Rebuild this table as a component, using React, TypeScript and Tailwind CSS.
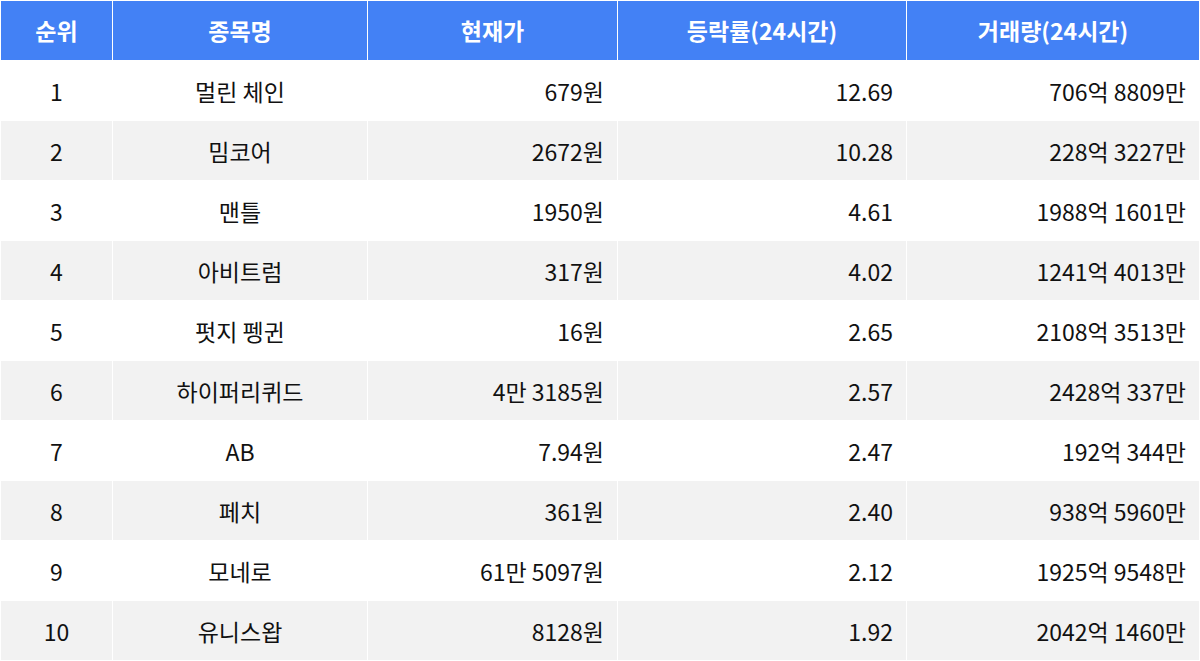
import React from 'react';

const rows = [
  ['1', '멀린 체인', '679원', '12.69', '706억 8809만'],
  ['2', '밈코어', '2672원', '10.28', '228억 3227만'],
  ['3', '맨틀', '1950원', '4.61', '1988억 1601만'],
  ['4', '아비트럼', '317원', '4.02', '1241억 4013만'],
  ['5', '펏지 펭귄', '16원', '2.65', '2108억 3513만'],
  ['6', '하이퍼리퀴드', '4만 3185원', '2.57', '2428억 337만'],
  ['7', 'AB', '7.94원', '2.47', '192억 344만'],
  ['8', '페치', '361원', '2.40', '938억 5960만'],
  ['9', '모네로', '61만 5097원', '2.12', '1925억 9548만'],
  ['10', '유니스왑', '8128원', '1.92', '2042억 1460만'],
];

const headers = ['순위', '종목명', '현재가', '등락률(24시간)', '거래량(24시간)'];

export default function App() {
  return (
    <div
      className="w-[1200px] bg-white text-[23px] text-[#111]"
      style={{ fontFamily: '"Noto Sans CJK KR", "Noto Sans", sans-serif' }}
    >
      <div className="grid grid-cols-[111px_254px_249px_288px_292px] gap-px p-px">
        {headers.map((h) => (
          <div key={h} className="h-[59px] bg-[#4381f5] text-white font-bold flex items-center justify-center">
            {h}
          </div>
        ))}
        {rows.map((r, i) => {
          const bg = i % 2 === 0 ? 'bg-white' : 'bg-[#f2f2f2]';
          return (
            <React.Fragment key={r[0]}>
              <div className={`h-[59px] ${bg} flex items-center justify-center pt-[2px]`}>{r[0]}</div>
              <div className={`h-[59px] ${bg} flex items-center justify-center pt-[2px]`}>{r[1]}</div>
              <div className={`h-[59px] ${bg} flex items-center justify-end pr-[13px] pt-[2px]`}>{r[2]}</div>
              <div className={`h-[59px] ${bg} flex items-center justify-end pr-[13px] pt-[2px]`}>{r[3]}</div>
              <div className={`h-[59px] ${bg} flex items-center justify-end pr-[13px] pt-[2px]`}>{r[4]}</div>
            </React.Fragment>
          );
        })}
      </div>
    </div>
  );
}
